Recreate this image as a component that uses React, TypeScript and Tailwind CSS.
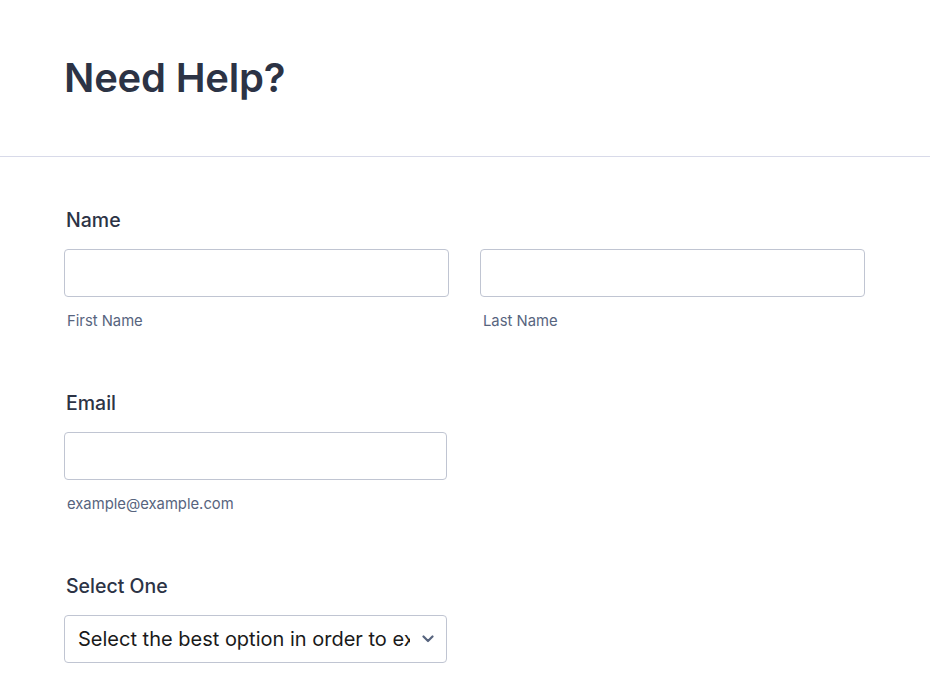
const font = { fontFamily: "Inter, 'Noto Sans', sans-serif" };

function Label({ children }: { children: React.ReactNode }) {
  return <div className="px-[2px] text-[19.5px] leading-7 font-medium text-[#2c3345]">{children}</div>;
}

function Sub({ children }: { children: React.ReactNode }) {
  return <div className="mt-[13px] px-[3px] text-[14.8px] leading-[22px] text-[#57647e]">{children}</div>;
}

function TextBox() {
  return <input type="text" className="block h-12 w-full rounded border border-[#c0c5d2] bg-white px-3 text-base outline-none" />;
}

export default function App() {
  return (
    <div className="min-h-screen bg-white" style={font}>
      <header className="flex h-[157px] items-center border-b border-[#d8dae9] px-16">
        <h1 className="text-[40px] leading-[48px] font-semibold tracking-[-0.2px] text-[#2c3345]">Need Help?</h1>
      </header>

      <form className="flex flex-col gap-[57px] px-16 pt-[49px]">
        <section>
          <Label>Name</Label>
          <div className="mt-[15px] grid w-[801px] grid-cols-2 gap-[31px]">
            <div>
              <TextBox />
              <Sub>First Name</Sub>
            </div>
            <div>
              <TextBox />
              <Sub>Last Name</Sub>
            </div>
          </div>
        </section>

        <section>
          <Label>Email</Label>
          <div className="mt-[15px] w-[383px]">
            <TextBox />
            <Sub>example@example.com</Sub>
          </div>
        </section>

        <section>
          <Label>Select One</Label>
          <div className="relative mt-[15px] w-[383px]">
            <div className="flex h-12 items-center overflow-hidden rounded border border-[#c0c5d2] bg-white pr-9 pl-[13px]">
              <span className="overflow-hidden text-[20px] whitespace-nowrap text-[#1a1a1a]">
                Select the best option in order to expedite your request
              </span>
            </div>
            <svg className="absolute top-[20px] right-[13px]" width="12" height="8" viewBox="0 0 12 8" fill="none">
              <path d="M1.5 1.5l4.5 4.5 4.5-4.5" stroke="#57647e" strokeWidth="2.2" strokeLinecap="round" strokeLinejoin="round" />
            </svg>
          </div>
        </section>
      </form>
    </div>
  );
}
